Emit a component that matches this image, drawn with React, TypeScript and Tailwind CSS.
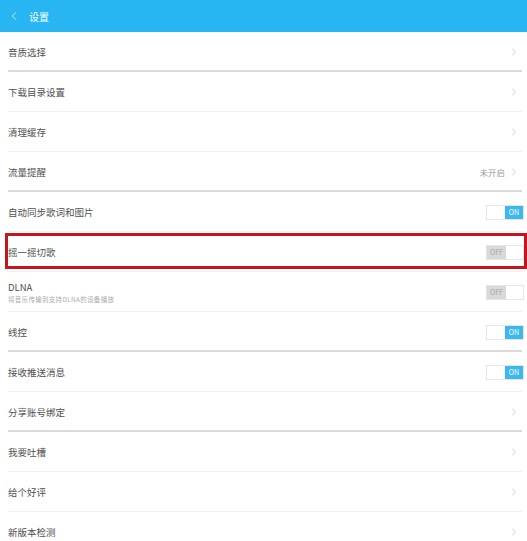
import { ChevronLeft, ChevronRight } from 'lucide-react';

type Row = {
    label: string;
    sub?: string;
    kind: 'arrow' | 'on' | 'off';
    extra?: string;
    group?: boolean; // darker divider under the row
    highlight?: boolean;
};

const rows: Row[] = [
    { label: '音质选择', kind: 'arrow', group: true },
    { label: '下载目录设置', kind: 'arrow' },
    { label: '清理缓存', kind: 'arrow' },
    { label: '流量提醒', kind: 'arrow', extra: '未开启', group: true },
    { label: '自动同步歌词和图片', kind: 'on' },
    { label: '摇一摇切歌', kind: 'off', highlight: true },
    { label: 'DLNA', sub: '将音乐传输到支持DLNA的设备播放', kind: 'off' },
    { label: '线控', kind: 'on', group: true },
    { label: '接收推送消息', kind: 'on' },
    { label: '分享账号绑定', kind: 'arrow', group: true },
    { label: '我要吐槽', kind: 'arrow' },
    { label: '给个好评', kind: 'arrow' },
    { label: '新版本检测', kind: 'arrow' },
];

const Toggle = ({ on }: { on: boolean }) =>
    on ? (
        <div className="flex h-[15px] w-[38px] border border-[#e6e6e6] bg-white">
            <div className="flex-1" />
            <div className="flex w-[18px] items-center justify-center bg-[#3cb8ee] text-[7px] text-white">ON</div>
        </div>
    ) : (
        <div className="flex h-[15px] w-[38px] border border-[#e6e6e6] bg-white">
            <div className="flex w-[19px] items-center justify-center bg-[#d9d9d9] text-[7px] text-[#a5a5a5]">OFF</div>
            <div className="flex-1" />
        </div>
    );

const App = () => {
    return (
        <div className="h-[541px] w-[527px] overflow-hidden bg-white font-['Noto_Sans_CJK_SC','Noto_Sans',sans-serif] text-[#505050]">
            <div className="flex h-[32px] items-center bg-[#27b6f1] text-white">
                <ChevronLeft size={14} strokeWidth={1.2} className="ml-[7px]" />
                <span className="ml-[8px] text-[10px]">设置</span>
            </div>
            {rows.map((row) => (
                <div key={row.label} className="relative flex h-[40px] items-center pr-[6px] pl-[8px]">
                    <div className="flex flex-1 flex-col">
                        <span className="text-[9.5px] leading-[12px]">{row.label}</span>
                        {row.sub && (
                            <span className="mt-[2px] text-[6.5px] leading-[8px] tracking-[0.3px] text-[#ababab]">{row.sub}</span>
                        )}
                    </div>
                    {row.extra && <span className="mr-[3px] text-[8.5px] text-[#9a9a9a]">{row.extra}</span>}
                    {row.kind === 'arrow' && (
                        <ChevronRight size={12} strokeWidth={1.1} className="mr-[1px] text-[#a8a8a8]" />
                    )}
                    {row.kind !== 'arrow' && (
                        <div className="mr-[-3px]">
                            <Toggle on={row.kind === 'on'} />
                        </div>
                    )}
                    <div
                        className={`absolute right-[5px] bottom-0 left-[8px] ${
                            row.group ? 'h-[2px] bg-[#dadada]' : 'h-px bg-[#f1f1f1]'
                        }`}
                    />
                    {row.highlight && (
                        <div className="absolute top-[1px] right-0 left-[5px] h-[36px] border-[3px] border-[#c4161c]" />
                    )}
                </div>
            ))}
        </div>
    );
};

export default App;
